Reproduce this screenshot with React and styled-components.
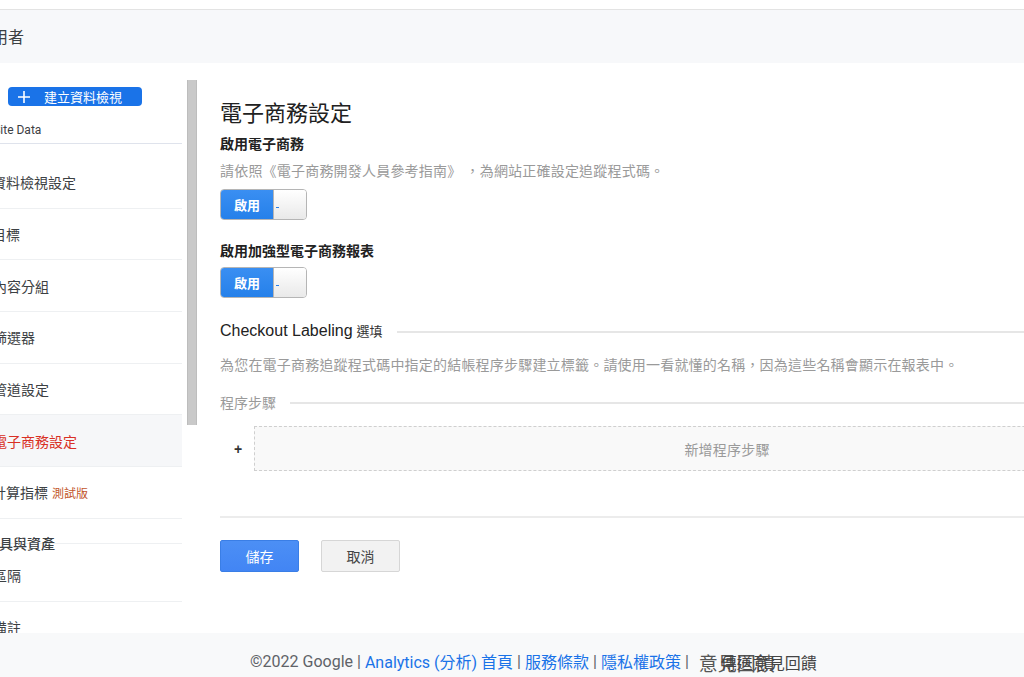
import React from 'react';
import styled, { createGlobalStyle } from 'styled-components';

const GlobalStyle = createGlobalStyle`
  html, body {
    margin: 0;
    padding: 0;
    overflow: hidden;
    background: #fff;
  }
  body {
    font-family: Roboto, "Noto Sans CJK TC", sans-serif;
    color: #3c4043;
  }
`;

const Page = styled.div`
  width: 1024px;
  height: 677px;
  display: flex;
  flex-direction: column;
  overflow: hidden;
`;

const TopStrip = styled.div`
  height: 9px;
  border-bottom: 1px solid #e3e3e3;
  background: #fff;
`;

const Header = styled.header`
  height: 53px;
  background: #f7f8fa;
  display: flex;
  align-items: center;
  font-size: 16px;
  color: #3c4043;

  span {
    margin-left: -24px;
    margin-top: -2px;
  }
`;

const Body = styled.div`
  flex: 1;
  display: flex;
  min-height: 0;
`;

const Sidebar = styled.nav`
  width: 182px;
  flex: none;
  padding-top: 24px;
  display: flex;
  flex-direction: column;
  overflow: hidden;
`;

const CreateButton = styled.button`
  margin-left: 8px;
  width: 134px;
  height: 22px;
  border: none;
  border-radius: 4px;
  background: #1a73e8;
  color: #fff;
  font-family: Roboto, "Noto Sans CJK TC", sans-serif;
  font-size: 13px;
  display: flex;
  align-items: center;
  gap: 14px;
  padding: 0 0 0 10px;
  cursor: pointer;
`;

const ViewName = styled.div`
  margin: 17px 0 0 -50px;
  font-size: 12px;
  color: #3c4043;
  white-space: nowrap;
  padding-bottom: 6px;
  border-bottom: 1px solid #dfe3ec;
`;

const NavList = styled.ul`
  list-style: none;
  margin: 13px 0 0;
  padding: 0;
`;

const NavItem = styled.li`
  height: 50.7px;
  display: flex;
  align-items: center;
  border-bottom: 1px solid #eef0f2;
  font-size: 14px;
  white-space: nowrap;
  color: ${(p) => (p.active ? '#d93025' : '#3c4043')};
  background: ${(p) => (p.active ? '#f6f7f9' : 'transparent')};

  span {
    margin-left: ${(p) => p.shift || 0}px;
  }
`;

const Beta = styled.em`
  font-style: normal;
  font-size: 12px;
  color: #c2552b;
  margin-left: 4px;
`;

const SectionTitle = styled.li`
  height: 24px;
  line-height: 50px;
  border-bottom: 1px solid #eef0f2;
  font-size: 14px;
  font-weight: 500;
  color: #3c4043;
  white-space: nowrap;
  margin-bottom: 6px;

  span {
    margin-left: -15px;
  }
`;

const ScrollTrack = styled.div`
  width: 10px;
  flex: none;
  margin-left: 5px;
  padding-top: 17px;
`;

const ScrollThumb = styled.div`
  height: 345px;
  background: #c9c9c9;
  border-left: 1px solid #bdbdbd;
  border-right: 1px solid #bdbdbd;
  box-sizing: border-box;
`;

const Main = styled.main`
  flex: none;
  width: 980px;
  padding: 36px 0 0 23px;
  font-family: "Liberation Sans", "Noto Sans CJK TC", sans-serif;
  color: #333;
`;

const Title = styled.h1`
  margin: 0 0 5px;
  font-size: 22px;
  font-weight: 400;
  line-height: 30px;
  color: #212121;
`;

const FieldLabel = styled.div`
  font-size: 14px;
  font-weight: 700;
  line-height: 20px;
  color: #222;
  margin-bottom: ${(p) => p.gap || 0}px;
`;

const Help = styled.p`
  margin: ${(p) => p.margin || '7px 0 8px'};
  font-size: 14px;
  letter-spacing: 0.2px;
  line-height: 20px;
  color: #9a9a9a;
  white-space: nowrap;
`;

const Toggle = styled.div`
  width: 87px;
  height: 31px;
  box-sizing: border-box;
  display: flex;
  border: 1px solid #b5b5b5;
  border-radius: 4px;
  overflow: hidden;
  margin-bottom: ${(p) => p.gap || 0}px;
`;

const ToggleOn = styled.div`
  width: 52px;
  background: linear-gradient(#3a8ff2, #2580ea);
  color: #fff;
  font-size: 13px;
  font-weight: 700;
  display: flex;
  align-items: center;
  justify-content: center;
`;

const ToggleKnob = styled.div`
  flex: 1;
  background: linear-gradient(#ffffff, #e9e9e9);
  border-left: 1px solid #b5b5b5;
  display: flex;
  align-items: flex-end;
  padding: 0 0 11px 2px;
`;

const Tick = styled.span`
  width: 3px;
  height: 1px;
  background: #2a7fe6;
`;

const LegendRow = styled.div`
  display: flex;
  align-items: center;
  gap: 14px;
  margin: ${(p) => p.margin};

  &::after {
    content: '';
    flex: 1;
    height: 2px;
    background: #e6e6e6;
  }
`;

const Legend = styled.div`
  font-size: ${(p) => (p.small ? 14 : 16)}px;
  line-height: 22px;
  color: ${(p) => (p.small ? '#9a9a9a' : '#222')};
  white-space: nowrap;

  small {
    font-size: 13px;
    color: #333;
    margin-left: 4px;
  }
`;

const StepRow = styled.div`
  display: flex;
  align-items: center;
  margin-top: 12px;
`;

const Plus = styled.span`
  width: 34px;
  font-size: 14px;
  font-weight: 700;
  color: #333;
  padding-left: 14px;
  box-sizing: border-box;
`;

const AddStep = styled.div`
  flex: 1;
  height: 45px;
  box-sizing: border-box;
  border: 1px dashed #cfcfcf;
  background: #f9f9f9;
  display: flex;
  align-items: center;
  justify-content: center;
  font-size: 14px;
  letter-spacing: 0.2px;
  color: #9a9a9a;
`;

const Divider = styled.hr`
  border: none;
  height: 2px;
  background: #ececec;
  margin: 45px 0 22px;
`;

const Actions = styled.div`
  display: flex;
  gap: 22px;
`;

const ActionButton = styled.button`
  width: 79px;
  height: 32px;
  border-radius: 2px;
  font-family: "Liberation Sans", "Noto Sans CJK TC", sans-serif;
  font-size: 14px;
  cursor: pointer;
  border: 1px solid ${(p) => (p.primary ? '#3a7ee6' : '#d6d6d6')};
  background: ${(p) => (p.primary ? 'linear-gradient(#4c8ff5, #4285f4)' : '#f2f2f2')};
  color: ${(p) => (p.primary ? '#fff' : '#444')};
`;

const Footer = styled.footer`
  height: 44px;
  flex: none;
  background: #f8f9fa;
  display: flex;
  align-items: center;
  padding: 12px 0 0 250px;
  box-sizing: border-box;
  font-size: 16px;
  color: #5f6368;
  white-space: nowrap;
`;

const FooterLink = styled.a`
  color: #1a73e8;
  text-decoration: none;
`;

const Pipe = styled.span`
  margin: 0 4px;
`;

const Feedback = styled.span`
  display: inline-grid;
  margin-left: 6px;
  align-items: center;

  span {
    grid-area: 1 / 1;
  }
`;

const FeedbackBig = styled.span`
  font-size: 19px;
  color: #555;
  font-family: "Noto Sans CJK TC", sans-serif;
  margin-top: 2px;
`;

const FeedbackSmall = styled.span`
  font-size: 16px;
  color: #444;
  margin-left: 22px;
  font-family: "Noto Sans CJK TC", sans-serif;
  margin-top: 2px;
`;

const navItems = [
  { label: '資料檢視設定', shift: -8 },
  { label: '目標', shift: -8 },
  { label: '內容分組', shift: -7 },
  { label: '篩選器', shift: -7 },
  { label: '管道設定', shift: -7 },
  { label: '電子商務設定', shift: -7, active: true },
  { label: '計算指標', shift: -8, beta: true },
];

function EnableToggle({ gap }) {
  return (
    <Toggle gap={gap}>
      <ToggleOn>啟用</ToggleOn>
      <ToggleKnob>
        <Tick />
      </ToggleKnob>
    </Toggle>
  );
}

export default function App() {
  return (
    <Page>
      <GlobalStyle />
      <TopStrip />
      <Header>
        <span>使用者</span>
      </Header>
      <Body>
        <Sidebar>
          <CreateButton>
            <svg width="12" height="12" viewBox="0 0 12 12">
              <path d="M6 0v12M0 6h12" stroke="#fff" strokeWidth="1.6" />
            </svg>
            建立資料檢視
          </CreateButton>
          <ViewName>All Web Site Data</ViewName>
          <NavList>
            {navItems.map((item) => (
              <NavItem key={item.label} active={item.active} shift={item.shift}>
                <span>{item.label}</span>
                {item.beta && <Beta>測試版</Beta>}
              </NavItem>
            ))}
            <SectionTitle>
              <span>工具與資產</span>
            </SectionTitle>
            <NavItem shift={-7}>
              <span>區隔</span>
            </NavItem>
            <NavItem shift={-7}>
              <span>備註</span>
            </NavItem>
          </NavList>
        </Sidebar>
        <ScrollTrack>
          <ScrollThumb />
        </ScrollTrack>
        <Main>
          <Title>電子商務設定</Title>
          <FieldLabel>啟用電子商務</FieldLabel>
          <Help>請依照《電子商務開發人員參考指南》 ，為網站正確設定追蹤程式碼。</Help>
          <EnableToggle gap={21} />
          <FieldLabel gap={6}>啟用加強型電子商務報表</FieldLabel>
          <EnableToggle />
          <LegendRow margin="22px 0 0">
            <Legend>
              Checkout Labeling<small>選填</small>
            </Legend>
          </LegendRow>
          <Help margin="12px 0 0">
            為您在電子商務追蹤程式碼中指定的結帳程序步驟建立標籤。請使用一看就懂的名稱，因為這些名稱會顯示在報表中。
          </Help>
          <LegendRow margin="17px 0 0">
            <Legend small>程序步驟</Legend>
          </LegendRow>
          <StepRow>
            <Plus>+</Plus>
            <AddStep>新增程序步驟</AddStep>
          </StepRow>
          <Divider />
          <Actions>
            <ActionButton primary>儲存</ActionButton>
            <ActionButton>取消</ActionButton>
          </Actions>
        </Main>
      </Body>
      <Footer>
        ©2022 Google<Pipe>|</Pipe>
        <FooterLink>Analytics (分析) 首頁</FooterLink>
        <Pipe>|</Pipe>
        <FooterLink>服務條款</FooterLink>
        <Pipe>|</Pipe>
        <FooterLink>隱私權政策</FooterLink>
        <Pipe>|</Pipe>
        <Feedback>
          <FeedbackBig>意見回饋</FeedbackBig>
          <FeedbackSmall>傳送意見回饋</FeedbackSmall>
        </Feedback>
      </Footer>
    </Page>
  );
}
